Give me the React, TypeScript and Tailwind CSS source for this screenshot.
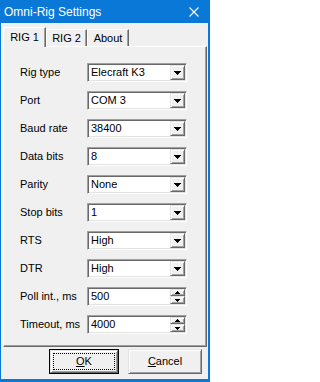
import React from "react";

const SUNKEN =
  "flex p-px bg-white border border-t-[#a0a0a0] border-l-[#a0a0a0] border-r-white border-b-white shadow-[inset_1px_1px_0_#696969,inset_-1px_-1px_0_#e3e3e3]";
const RAISED =
  "bg-[#f0f0f0] border border-t-[#e3e3e3] border-l-[#e3e3e3] border-r-[#696969] border-b-[#696969] shadow-[inset_1px_1px_0_#ffffff,inset_-1px_-1px_0_#a0a0a0]";

type Row = { label: string; value: string; spin?: boolean };

const rows: Row[] = [
  { label: "Rig type", value: "Elecraft K3" },
  { label: "Port", value: "COM 3" },
  { label: "Baud rate", value: "38400" },
  { label: "Data bits", value: "8" },
  { label: "Parity", value: "None" },
  { label: "Stop bits", value: "1" },
  { label: "RTS", value: "High" },
  { label: "DTR", value: "High" },
  { label: "Poll int., ms", value: "500", spin: true },
  { label: "Timeout, ms", value: "4000", spin: true },
];

function DownArrow() {
  return (
    <svg width="7" height="4" viewBox="0 0 7 4" shapeRendering="crispEdges">
      <path d="M0 0h7v1h-1v1h-1v1h-1v1h-1v-1h-1v-1h-1v-1h-1z" fill="#000" />
    </svg>
  );
}

function SpinUp() {
  return (
    <svg width="5" height="3" viewBox="0 0 5 3" shapeRendering="crispEdges">
      <path d="M2 0h1v1h1v1h1v1h-5v-1h1v-1h1z" fill="#000" />
    </svg>
  );
}

function SpinDown() {
  return (
    <svg width="5" height="3" viewBox="0 0 5 3" shapeRendering="crispEdges">
      <path d="M0 0h5v1h-1v1h-1v1h-1v-1h-1v-1h-1z" fill="#000" />
    </svg>
  );
}

function Field({ row }: { row: Row }) {
  return (
    <div className={`w-[100px] h-[19px] ${SUNKEN}`}>
      <div className="flex-1 flex items-center pl-[2px] leading-none">{row.value}</div>
      {row.spin ? (
        <div className="w-[15px] flex flex-col">
          <div className={`h-[7px] flex items-center justify-center ${RAISED}`}>
            <SpinUp />
          </div>
          <div className={`h-[8px] flex items-center justify-center ${RAISED}`}>
            <SpinDown />
          </div>
        </div>
      ) : (
        <div className={`w-[15px] flex items-center justify-center ${RAISED}`}>
          <DownArrow />
        </div>
      )}
    </div>
  );
}

export default function App() {
  return (
    <div className="w-[210px] h-[382px] flex flex-col bg-[#f0f0f0] border-l border-r-2 border-b-[3px] border-[#0a78d7] font-['Liberation_Sans',Arial,sans-serif] text-[11px] text-black select-none">
      {/* Title bar */}
      <div className="h-[23px] shrink-0 flex items-center justify-between bg-[#0a78d7] pl-[3px] pr-[9px] text-white text-[12px]">
        <span>Omni-Rig Settings</span>
        <svg width="10" height="10" viewBox="0 0 10 10">
          <path d="M0.5 0.5L9.5 9.5M9.5 0.5L0.5 9.5" stroke="#fff" strokeWidth="1.1" />
        </svg>
      </div>

      {/* Tabs */}
      <div className="mt-[4px] ml-[2px] mr-[1px] h-[19px] flex items-end relative z-10">
        <div className="w-[43px] h-[20px] -mb-px flex items-center justify-center bg-[#f0f0f0] border-l border-t border-white border-r border-r-[#696969] shadow-[inset_-1px_0_0_#a0a0a0] pb-[1px]">
          RIG 1
        </div>
        <div className="w-[41px] h-[17px] flex items-center justify-center border-l border-t border-white border-r border-r-[#696969] shadow-[inset_-1px_0_0_#a0a0a0]">
          RIG 2
        </div>
        <div className="w-[42px] h-[17px] flex items-center justify-center border-l border-t border-white border-r border-r-[#696969] shadow-[inset_-1px_0_0_#a0a0a0]">
          About
        </div>
      </div>

      {/* Panel */}
      <div className="ml-[2px] mr-[1px] h-[301px] shrink-0 flex flex-col gap-[9px] pt-[16px] pl-[16px] border border-t-white border-l-white border-r-[#696969] border-b-[#696969] shadow-[inset_-1px_-1px_0_#a0a0a0]">
        {rows.map((row) => (
          <div key={row.label} className="flex items-center h-[19px]">
            <div className="w-[67px] leading-none">{row.label}</div>
            <Field row={row} />
          </div>
        ))}
      </div>

      {/* Buttons */}
      <div className="mt-[2px] h-[25px] flex ml-[48px] gap-[9px]">
        <div className="w-[70px] h-[25px] flex border border-black">
          <div className={`flex-1 flex p-[2px] ${RAISED}`}>
            <div className="flex-1 flex items-center justify-center border border-dotted border-black leading-none">
              <span>
                <span className="underline underline-offset-1">O</span>K
              </span>
            </div>
          </div>
        </div>
        <div className={`w-[74px] h-[25px] flex items-center justify-center leading-none ${RAISED}`}>
          <span>
            <span className="underline underline-offset-1">C</span>ancel
          </span>
        </div>
      </div>
    </div>
  );
}
